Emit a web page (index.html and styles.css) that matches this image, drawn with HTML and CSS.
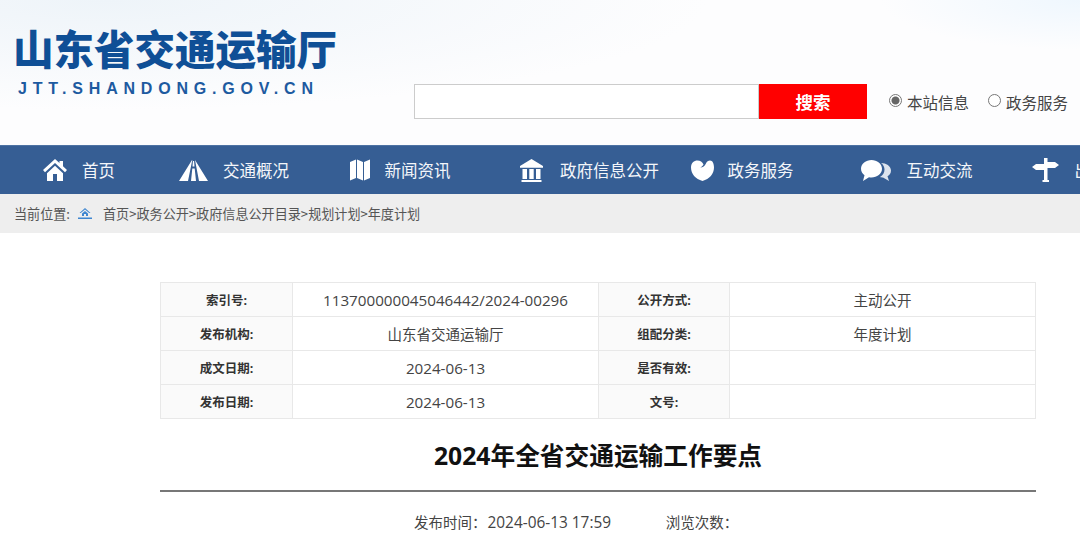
FILE: index.html
```html
<!DOCTYPE html>
<html lang="zh-CN">
<head>
  <meta charset="UTF-8" />
  <title>2024年全省交通运输工作要点</title>
  <link rel="stylesheet" href="styles.css">
</head>
<body>
  <header class="top">
    <div class="logo">
      <div class="logo-name">山东省交通运输厅</div>
      <div class="logo-url">JTT.SHANDONG.GOV.CN</div>
    </div>
    <form class="search">
      <input class="search-input" type="text" />
      <button class="search-btn" type="button">搜索</button>
      <label class="scope"><span class="radio checked"></span>本站信息</label>
      <label class="scope"><span class="radio"></span>政务服务</label>
    </form>
  </header>

  <nav class="nav">
    <a class="nav-item item-home">
      <svg class="icon icon-home" viewBox="0 0 24 22"><path d="M12 0 0 11l2 2.200L12 4l10 9.200 2-2.200-4-3.700V2h-3.500v2.100zM4 14.200V22h6v-7h4v7h6v-7.800L12 6.800z"/></svg>
      <span>首页</span>
    </a>
    <a class="nav-item item-road">
      <svg class="icon icon-road" viewBox="0 0 29 21"><path d="M13 0 0 21h9L13.300 0zM13.900 1h1.200l.4 5.500h-2zM13.300 8.500h2.400L17 21h-5zM16 0l13 21h-9z"/></svg>
      <span>交通概况</span>
    </a>
    <a class="nav-item item-map">
      <svg class="icon icon-map" viewBox="0 0 20 22"><path d="M0 3l6-2.500v18.500L0 21.500zM7 .5l6 2.500v18.500L7 19zM14 3 20 .5V19l-6 2.500z"/></svg>
      <span>新闻资讯</span>
    </a>
    <a class="nav-item item-gov">
      <svg class="icon icon-gov" viewBox="0 0 23 23"><path d="M11.500 0 0 7v1.800h23V7zM2.500 10h4.500v10H2.500zM9.300 10h4.400v10H9.300zM16 10h4.500v10H16zM1.500 21h20v2h-20z"/></svg>
      <span>政府信息公开</span>
    </a>
    <a class="nav-item item-heart">
      <svg class="icon icon-heart" viewBox="0 0 23 21"><path d="M11.500 21C4.500 19 0 14 0 7.500 0 3 3 .5 6.500.5c2.800 0 4.800 1.500 6 4-.8 1.300-1.800 2.300-3.300 3 2.800-.2 4.600-1.500 5.600-3.800C15.800 1.700 17.300.5 19 .5c2.500 0 4 2.800 4 7 0 6.500-4.500 11.500-11.500 13.500z"/></svg>
      <span>政务服务</span>
    </a>
    <a class="nav-item item-talk">
      <svg class="icon icon-talk" viewBox="0 0 30 21"><path class="back" d="M20 3c5 0 10 3 10 7.500 0 2.800-1.500 4.500-3.500 5.800L28 21l-6-3.500c-1.500 0-2-.1-3-.4 3-2 4.500-4.500 4.500-7.600 0-2.500-1.200-5-3.500-6.500z"/><path d="M10.500 0C16 0 21 3.500 21 8.800s-5 8.700-10.500 8.700c-1 0-1.500 0-2.500-.2L2 21l1.500-5.800C1.500 14 0 11.500 0 8.800 0 3.500 5 0 10.500 0z"/></svg>
      <span>互动交流</span>
    </a>
    <a class="nav-item item-sign">
      <svg class="icon icon-sign" viewBox="0 0 27 24"><path d="M12 0h3.500v4H23l4 3-4 3h-7.500v12h1.500v2h-6.500v-2H12V12H4L0 9l4-3h8z"/></svg>
      <span>出行服务</span>
    </a>
  </nav>

  <div class="crumb">
    <span class="crumb-label">当前位置:</span>
    <svg class="crumb-home" viewBox="0 0 14 11"><path d="M7 0 1.500 5h1.300L7 1.600 11.200 5h1.300zM4 5.500V8h2V6h2v2h2V5.500L7 3zM0 9.500h14V11H0z"/></svg>
    <span>首页&gt;政务公开&gt;政府信息公开目录&gt;规划计划&gt;年度计划</span>
  </div>

  <main class="article">
    <table class="meta">
      <tr><th class="col-a">索引号:</th><td class="col-b num">113700000045046442/2024-00296</td><th class="col-c">公开方式:</th><td>主动公开</td></tr>
      <tr><th>发布机构:</th><td>山东省交通运输厅</td><th>组配分类:</th><td>年度计划</td></tr>
      <tr><th>成文日期:</th><td class="num">2024-06-13</td><th>是否有效:</th><td></td></tr>
      <tr><th>发布日期:</th><td class="num">2024-06-13</td><th>文号:</th><td></td></tr>
    </table>
    <h1 class="title">2024年全省交通运输工作要点</h1>
    <div class="info">
      <span class="info-time">发布时间：<span class="num">2024-06-13 17:59</span></span>
      <span>浏览次数：</span>
    </div>
  </main>
</body>
</html>
```

FILE: styles.css
```css
body {
  margin: 0;
  width: 1080px;
  height: 545px;
  overflow: hidden;
  background-color: #fff;
  font-family: "Open Sans", "Noto Sans CJK SC", sans-serif;
  color: #333;
}

.top {
  height: 145px;
  box-sizing: border-box;
  padding: 24px 12px 0 13px;
  display: flex;
  justify-content: space-between;
  background:
    radial-gradient(ellipse 200px 50px at 100% 0, #eff7fe 0%, rgba(239, 247, 254, 0) 100%),
    radial-gradient(ellipse 600px 110px at 10% 0, #eef4f9 0%, rgba(238, 244, 249, 0) 100%),
    #fdfdfe;
}

.logo-name {
  font-family: "Noto Sans CJK SC", sans-serif;
  font-size: 40.500px;
  line-height: 48px;
  font-weight: 900;
  color: #0f4f96;
  white-space: nowrap;
}

.logo-url {
  margin: 7px 0 0 5px;
  font-family: "Liberation Sans", sans-serif;
  font-size: 16px;
  line-height: 20px;
  font-weight: 700;
  letter-spacing: 5.800px;
  color: #1d5aa0;
}

.search {
  display: flex;
  align-items: center;
  height: 35px;
  margin-top: 60px;
}

.search-input {
  width: 345px;
  height: 35px;
  box-sizing: border-box;
  border: 1px solid #ccc;
  background: #fff;
}

.search-btn {
  width: 108px;
  height: 35px;
  border: none;
  background-color: #f00;
  color: #fff;
  font-family: "Noto Sans CJK SC", sans-serif;
  font-size: 17.500px;
  font-weight: 700;
}

.scope {
  display: flex;
  align-items: center;
  margin-left: 22px;
  font-family: "Noto Sans CJK SC", sans-serif;
  font-size: 15.500px;
  color: #444;
}

.scope + .scope {
  margin-left: 19px;
}

.radio {
  width: 11px;
  height: 11px;
  margin: -3px 5px 0 0;
  border: 1px solid #777;
  border-radius: 50%;
  background: #fff;
  box-sizing: content-box;
}

.radio.checked {
  background: radial-gradient(circle, #666 0 3.500px, #fff 4.500px);
}

.nav {
  display: flex;
  height: 49px;
  padding-left: 43px;
  background-color: #365e94;
  border-top: 1px solid #4d72a3;
  box-sizing: border-box;
  overflow: hidden;
}

.nav-item {
  flex: none;
  display: flex;
  align-items: center;
  width: 170.500px;
  font-family: "Noto Sans CJK SC", sans-serif;
  font-size: 16.500px;
  color: #f4f6fa;
  white-space: nowrap;
}

.item-home {
  width: 136px;
}

.icon {
  flex: none;
  fill: #fff;
}

.icon-home { width: 24px; height: 22px; margin-right: 15px; }
.icon-road { width: 29px; height: 21px; margin-right: 15px; }
.icon-map { width: 20px; height: 22px; margin-right: 15px; }
.icon-gov { width: 23px; height: 23px; margin-right: 17px; }
.icon-heart { width: 23px; height: 21px; margin-right: 14px; }
.icon-talk { width: 30px; height: 21px; margin-right: 15.500px; }
.icon-sign { width: 27px; height: 24px; margin-right: 16px; }
.icon-talk .back { fill: #dde4ee; }

.crumb {
  display: flex;
  align-items: center;
  height: 39px;
  padding-left: 14px;
  background-color: #eee;
  font-family: "Noto Sans CJK SC", sans-serif;
  font-size: 13.100px;
  color: #555;
}

.crumb-home {
  width: 14px;
  height: 11px;
  margin: 0 11px 0 8px;
  fill: #3f86d0;
}

.article {
  padding: 49px 44px 0 160px;
}

.meta {
  width: 876px;
  table-layout: fixed;
  border-collapse: collapse;
  font-size: 14.500px;
  color: #444;
}

.meta th,
.meta td {
  height: 33px;
  padding: 0;
  border: 1px solid #e8e8e8;
  text-align: center;
  font-weight: 400;
}

.meta th {
  background-color: #fafafa;
  font-size: 12.500px;
  font-weight: 700;
  color: #333;
}

.meta .col-a { width: 131px; }
.meta .col-b { width: 305px; }
.meta .col-c { width: 130px; }

.num {
  font-size: 15.200px;
}

.title {
  margin: 20px 0 0;
  font-size: 24.700px;
  line-height: 34px;
  font-weight: 700;
  color: #111;
  text-align: center;
}

.info {
  margin-top: 17px;
  padding: 21px 0 0 254px;
  border-top: 2px solid #777;
  font-size: 14.500px;
  line-height: 20px;
  color: #444;
}

.info .num {
  margin-left: 1px;
  font-size: 15.400px;
}

.info-time {
  margin-right: 51px;
}
```
